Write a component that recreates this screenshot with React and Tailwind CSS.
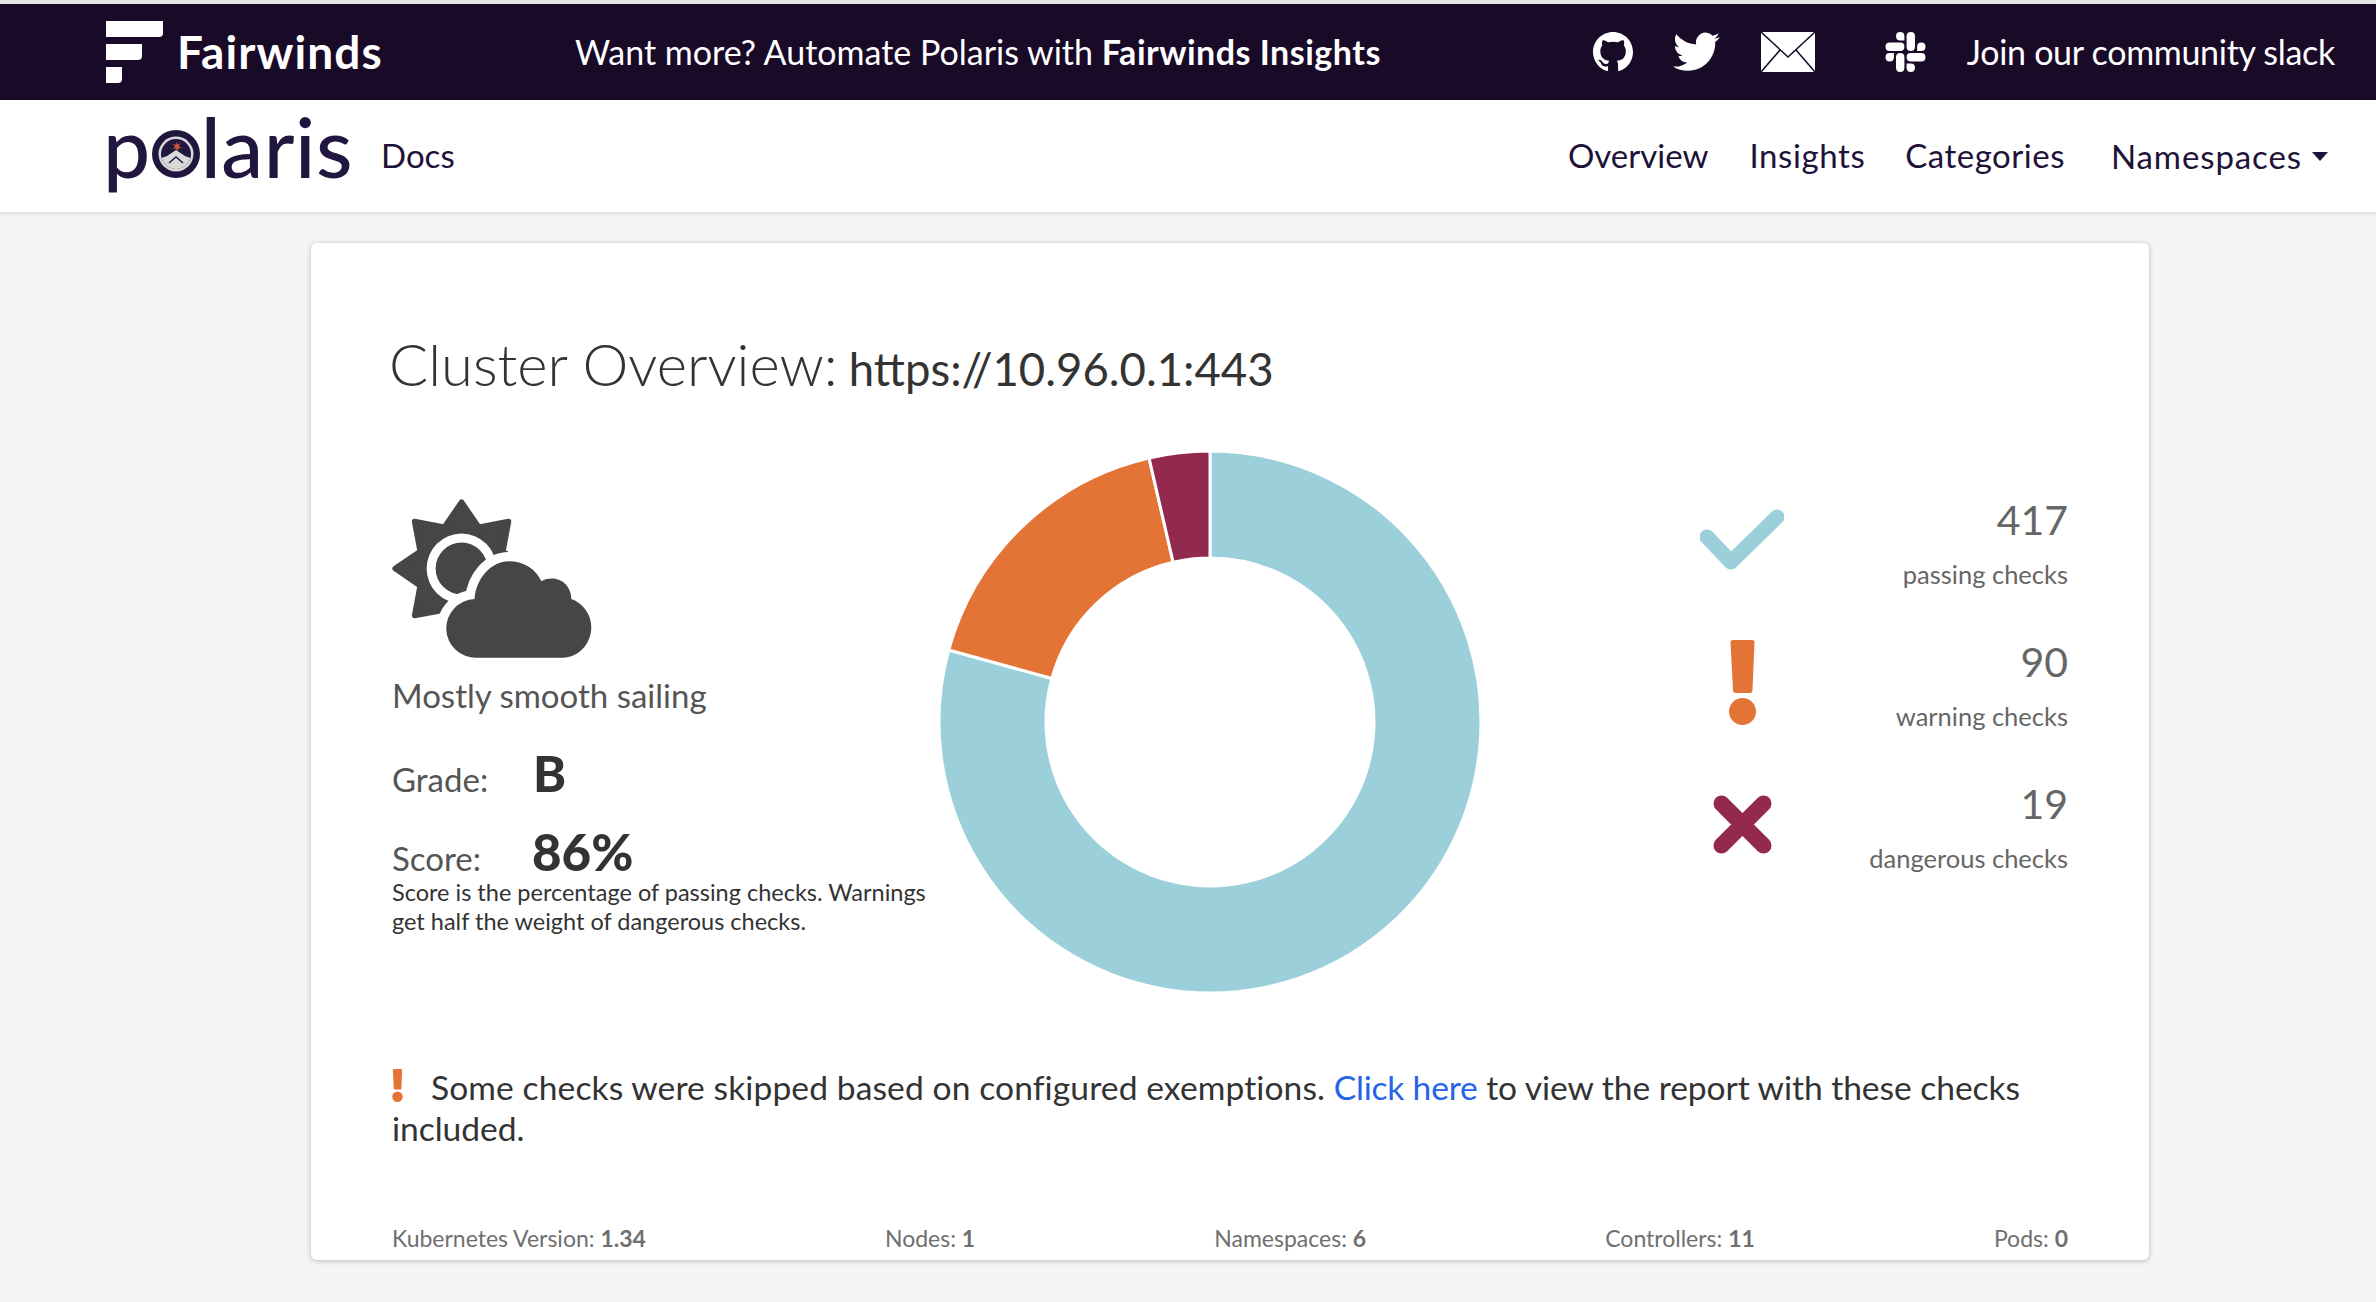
import { useMemo } from 'react';

const BLUE = '#9bd0da';
const ORANGE = '#e37436';
const RED = '#93294f';

function polar(cx, cy, r, deg) {
  const a = ((deg - 90) * Math.PI) / 180;
  return [cx + r * Math.cos(a), cy + r * Math.sin(a)];
}

function Donut() {
  const data = [
    { v: 417, c: BLUE },
    { v: 90, c: ORANGE },
    { v: 19, c: RED },
  ];
  const total = 526;
  let start = 0;
  return (
    <svg width="544" height="544" viewBox="0 0 544 544">
      {data.map((d) => {
        const sweep = (d.v / total) * 360;
        const end = start + sweep;
        const large = sweep > 180 ? 1 : 0;
        const [x1, y1] = polar(272, 272, 271, start);
        const [x2, y2] = polar(272, 272, 271, end);
        const [x3, y3] = polar(272, 272, 164, end);
        const [x4, y4] = polar(272, 272, 164, start);
        start = end;
        return (
          <path
            key={d.c}
            d={`M${x1} ${y1}A271 271 0 ${large} 1 ${x2} ${y2}L${x3} ${y3}A164 164 0 ${large} 0 ${x4} ${y4}Z`}
            fill={d.c}
            stroke="#fff"
            strokeWidth="3"
          />
        );
      })}
    </svg>
  );
}

function WeatherIcon() {
  const star = useMemo(() => {
    const pts = [];
    for (let i = 0; i < 16; i++) {
      const r = i % 2 === 0 ? 200 : 135;
      const [x, y] = polar(305, 290, r, i * 22.5);
      pts.push(`${x},${y}`);
    }
    return pts.join(' ');
  }, []);
  const cloud =
    'M350 558a88 88 0 0 1-6-176c4-62 50-114 103-114 44 0 80 22 98 60 10-6 20-8 32-8 34 0 58 28 58 62 34 12 60 46 60 84 0 52-40 92-85 92Z';
  return (
    <svg width="203" height="163" viewBox="90 75 610 490">
      <polygon points={star} fill="#464646" stroke="#464646" strokeWidth="16" strokeLinejoin="round" />
      <circle cx="305" cy="290" r="105" fill="#fff" />
      <circle cx="305" cy="290" r="78" fill="#464646" />
      <path d={cloud} fill="#fff" stroke="#fff" strokeWidth="56" strokeLinejoin="round" />
      <path d={cloud} fill="#464646" />
    </svg>
  );
}

function CheckIcon() {
  return (
    <svg width="84" height="63" viewBox="0 0 84 63">
      <path d="M7 28 L31 53 L77 8" fill="none" stroke={BLUE} strokeWidth="15" strokeLinejoin="round" strokeLinecap="round" />
    </svg>
  );
}

function BangIcon({ w = 27, h = 85 }) {
  return (
    <svg width={w} height={h} viewBox="0 0 27 85">
      <path d="M4 0h19a2.500 2.500 0 0 1 2.500 2.500L23.500 50a3 3 0 0 1-3 3H7a3 3 0 0 1-3-3L1.500 2.500A2.500 2.500 0 0 1 4 0Z" fill={ORANGE} />
      <circle cx="13.500" cy="71.500" r="13.500" fill={ORANGE} />
    </svg>
  );
}

function CrossIcon() {
  return (
    <svg width="59" height="59" viewBox="0 0 59 59">
      <path d="M8.500 8.500L50.500 50.500M50.500 8.500L8.500 50.500" fill="none" stroke={RED} strokeWidth="16" strokeLinecap="round" />
    </svg>
  );
}

function Stat({ icon, n, label }) {
  return (
    <div className="flex items-center justify-between h-[142px]">
      <div className="w-[84px] flex justify-center mb-[10px]">{icon}</div>
      <div className="text-right mb-[4px]">
        <div className="text-[41px] leading-[50px] text-[#666666] -mt-[3px]">{n}</div>
        <div className="text-[25.500px] leading-[30px] mt-[14px] text-[#666666]">{label}</div>
      </div>
    </div>
  );
}

function Meta({ label, value }) {
  return (
    <span>
      {label}: <b className="font-bold">{value}</b>
    </span>
  );
}

export default function App() {
  return (
    <div className="h-[1302px] overflow-hidden bg-[#f4f4f4] font-['Lato',sans-serif] text-[#333333]">
      <div className="border-t-4 border-[#e4e4e4] bg-[#190a28] h-[100px] flex items-center text-white">
        <div className="ml-[106px] w-[57px] flex flex-col gap-[7px]">
          <div className="h-[16px] w-[57px] bg-white rounded-br-[4px]" />
          <div className="h-[16px] w-[36px] bg-white rounded-br-[4px]" />
          <div className="h-[16px] w-[16px] bg-white rounded-br-[4px]" />
        </div>
        <span className="ml-[14px] w-[398px] text-[46px] font-bold leading-none tracking-[1.100px]">Fairwinds</span>
        <span className="text-[34px] mb-[2px]">
          Want more? Automate Polaris with <b className="font-bold tracking-[0.500px]">Fairwinds Insights</b>
        </span>
        <div className="ml-auto flex items-center pr-[41px]">
          <svg width="40" height="40" viewBox="0 0 16 16" fill="#fff">
            <path d="M8 0C3.580 0 0 3.580 0 8c0 3.540 2.290 6.530 5.470 7.590.4.070.55-.17.55-.38v-1.490c-2.010.37-2.530-.49-2.690-.94-.09-.23-.48-.94-.82-1.130-.28-.15-.68-.52-.01-.53.63-.01 1.080.58 1.230.82.72 1.210 1.870.87 2.330.66.070-.52.28-.87.51-1.070-1.780-.2-3.640-.89-3.640-3.950 0-.87.31-1.590.82-2.150-.08-.2-.36-1.020.08-2.120 0 0 .67-.21 2.200.82.64-.18 1.320-.27 2-.27s1.360.09 2 .27c1.530-1.040 2.200-.82 2.200-.82.44 1.100.16 1.920.08 2.120.51.56.82 1.270.82 2.150 0 3.070-1.870 3.750-3.650 3.950.29.25.54.73.54 1.480v2.190c0 .21.15.46.55.38A8.010 8.010 0 0 0 16 8c0-4.420-3.580-8-8-8Z" />
          </svg>
          <svg className="ml-[40px]" width="47" height="40" viewBox="0 0 24 20" fill="#fff">
            <path d="M24 2.400a9.800 9.800 0 0 1-2.830.78A4.930 4.930 0 0 0 23.340.46a9.860 9.860 0 0 1-3.130 1.190A4.920 4.920 0 0 0 11.830 6.130 13.970 13.970 0 0 1 1.670.990a4.920 4.920 0 0 0 1.520 6.570 4.900 4.900 0 0 1-2.230-.62v.06a4.920 4.920 0 0 0 3.950 4.830 4.940 4.940 0 0 1-2.220.08 4.930 4.930 0 0 0 4.600 3.420A9.880 9.880 0 0 1 0 17.370 13.940 13.940 0 0 0 7.550 19.580c9.060 0 14.010-7.510 14.010-14.010l-.02-.64A10 10 0 0 0 24 2.400Z" />
          </svg>
          <svg className="ml-[41px]" width="54" height="40" viewBox="0 0 54 40">
            <rect width="54" height="40" fill="#fff" />
            <path d="M0 0L27 25L54 0M0 40L19 18M54 40L35 18" fill="none" stroke="#190a28" strokeWidth="1.500" />
          </svg>
          <svg className="ml-[70px]" width="41" height="40" viewBox="0 0 24 24" fill="#fff">
            <path d="M5.040 15.170a2.530 2.530 0 0 1-2.520 2.520A2.530 2.530 0 0 1 0 15.170a2.530 2.530 0 0 1 2.520-2.520h2.520v2.520Zm1.270 0a2.530 2.530 0 0 1 2.520-2.520 2.530 2.530 0 0 1 2.520 2.520v6.310A2.530 2.530 0 0 1 8.830 24a2.530 2.530 0 0 1-2.520-2.520v-6.310ZM8.830 5.040a2.530 2.530 0 0 1-2.520-2.520A2.530 2.530 0 0 1 8.830 0a2.530 2.530 0 0 1 2.520 2.520v2.520H8.830Zm0 1.270a2.530 2.530 0 0 1 2.520 2.520 2.530 2.530 0 0 1-2.520 2.520H2.520A2.530 2.530 0 0 1 0 8.830a2.530 2.530 0 0 1 2.520-2.520h6.310Zm10.130 2.520a2.530 2.530 0 0 1 2.520-2.520A2.530 2.530 0 0 1 24 8.830a2.530 2.530 0 0 1-2.520 2.520h-2.520V8.830Zm-1.270 0a2.530 2.530 0 0 1-2.520 2.520 2.530 2.530 0 0 1-2.520-2.520V2.520A2.530 2.530 0 0 1 15.170 0a2.530 2.530 0 0 1 2.520 2.520v6.310Zm-2.520 10.130a2.530 2.530 0 0 1 2.520 2.520A2.530 2.530 0 0 1 15.170 24a2.530 2.530 0 0 1-2.520-2.520v-2.520h2.520Zm0-1.270a2.530 2.530 0 0 1-2.520-2.520 2.530 2.530 0 0 1 2.520-2.520h6.310A2.530 2.530 0 0 1 24 15.170a2.530 2.530 0 0 1-2.520 2.520h-6.310Z" />
          </svg>
          <span className="ml-[41px] text-[34px] tracking-[-0.300px] mb-[2px]">Join our community slack</span>
        </div>
      </div>

      <nav className="h-[112px] bg-white shadow-[0_2px_4px_rgba(0,0,0,0.1)] flex items-center text-[#1e1238] relative">
        <div className="ml-[103px] flex items-center text-[84px] font-medium leading-none tracking-[0.500px] text-[#21163d] mb-[20px]">
          <span>p</span>
          <svg className="mt-[16px]" width="50" height="50" viewBox="0 0 50 50">
            <circle cx="25" cy="25" r="24" fill="#21163d" />
            <circle cx="25" cy="25" r="17.500" fill="#d9d9d9" />
            <circle cx="25" cy="25" r="15" fill="#21163d" />
            <path d="M10.500 29L16 27L25 21L34 27L39.500 29A15 15 0 0 1 10.500 29Z" fill="#d9d9d9" />
            <path d="M18 34L25 28L32 34" fill="none" stroke="#21163d" strokeWidth="1.500" />
            <path d="M25 12l1.200 3.500 3.300-1.500-1.700 3.200 3 1.500-3.300.7-1 3.100-1.500-3-3.500.5 2.500-2.300-2.200-2.700 3.300.7Z" fill="#c9543b" />
          </svg>
          <span>laris</span>
        </div>
        <span className="ml-[28px] text-[33px]">Docs</span>
        <div className="ml-auto flex items-center text-[33px] pr-[48px]">
          <span>Overview</span>
          <span className="ml-[41px] tracking-[0.600px]">Insights</span>
          <span className="ml-[40px] tracking-[0.500px]">Categories</span>
          <span className="ml-[46px] tracking-[0.900px] mt-[2px]">Namespaces</span>
          <span className="ml-[10px] w-0 h-0 border-x-[8px] border-x-transparent border-t-[9px] border-t-[#1e1238]" />
        </div>
      </nav>

      <main className="ml-[311px] mt-[31px] w-[1838px] h-[1017px] bg-white rounded-[6px] shadow-[0_1px_5px_rgba(0,0,0,0.25)] pl-[81px] pr-[81px] pt-[85px] overflow-hidden">
        <h1 className="flex items-baseline h-[72px] -ml-[3px] text-[#333333]">
          <span className="text-[58px] font-light leading-[72px]">Cluster Overview:</span>
          <span className="ml-[11px] text-[45.500px] leading-[72px]">https://10.96.0.1:443</span>
        </h1>

        <div className="flex mt-[52px] h-[542px]">
          <div className="w-[540px] pt-[45px] shrink-0">
            <div className="-ml-[2px]"><WeatherIcon /></div>
            <div className="text-[33px] leading-[40px] mt-[15px] text-[#555555]">Mostly smooth sailing</div>
            <div className="flex items-baseline mt-[33px] h-[52px] text-[#555555]">
              <span className="w-[141px] text-[33px] leading-none">Grade:</span>
              <b className="text-[50px] leading-none font-black text-[#333333]">B</b>
            </div>
            <div className="flex items-baseline mt-[26px] h-[52px] text-[#555555]">
              <span className="w-[140px] text-[33px] leading-none">Score:</span>
              <b className="text-[51px] leading-none font-black text-[#333333]">86%</b>
            </div>
            <p className="text-[23.500px] leading-[29px] w-[560px]">
              Score is the percentage of passing checks. Warnings get half the weight of dangerous checks.
            </p>
          </div>
          <div className="ml-[6px] -mt-[2px] shrink-0"><Donut /></div>
          <div className="ml-auto w-[368px] pt-[22px] shrink-0">
            <Stat icon={<CheckIcon />} n="417" label="passing checks" />
            <Stat icon={<BangIcon />} n="90" label="warning checks" />
            <Stat icon={<CrossIcon />} n="19" label="dangerous checks" />
          </div>
        </div>

        <p className="text-[33.600px] leading-[41px] mt-[73px]">
          <span className="inline-block mr-[28px] align-[-2px]"><BangIcon w={11} h={33} /></span>
          <span className="tracking-[0.100px]">Some checks were skipped based on configured exemptions.</span>{' '}
          <a className="text-[#2563eb] tracking-[-0.200px]">Click here</a>{' '}
          <span className="tracking-[-0.050px]">to view the report with these checks included.</span>
        </p>

        <div className="flex justify-between text-[23px] leading-[28px] text-[#6f6f6f] mt-[75px]">
          <Meta label="Kubernetes Version" value="1.34" />
          <Meta label="Nodes" value="1" />
          <Meta label="Namespaces" value="6" />
          <Meta label="Controllers" value="11" />
          <Meta label="Pods" value="0" />
        </div>
      </main>
    </div>
  );
}
